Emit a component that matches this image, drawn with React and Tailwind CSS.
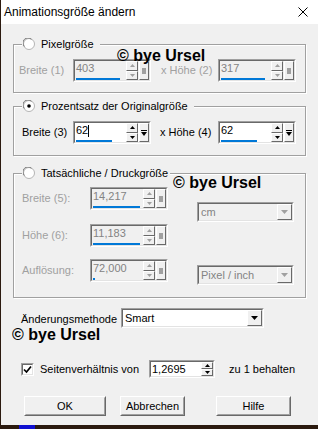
import React from 'react';

const sunkenOuter = 'border border-t-[#a0a0a0] border-l-[#a0a0a0] border-b-white border-r-white';
const sunkenInner = 'border border-t-[#696969] border-l-[#696969] border-b-[#e3e3e3] border-r-[#e3e3e3]';
const raised = 'border border-t-white border-l-white border-b-[#696969] border-r-[#696969]';

const Radio = ({ checked }) => (
  <svg width="12" height="12" viewBox="0 0 12 12" className="shrink-0">
    <circle cx="6" cy="6" r="5.5" fill="#fff" stroke="#b4b4b4" />
    <path d="M1.4 8.5 A5 5 0 0 1 8.5 1.4" stroke="#7a7a7a" fill="none" />
    {checked && <circle cx="6" cy="6" r="1.8" fill="#000" />}
  </svg>
);

const Tri = ({ up, color }) => (
  <svg width="5" height="3" viewBox="0 0 5 3">
    <path d={up ? 'M0 3 L2.5 0 L5 3Z' : 'M0 0 L5 0 L2.5 3Z'} fill={color} />
  </svg>
);

const SpinBtn = ({ up, enabled }) => (
  <div className={`flex-1 flex items-center justify-center bg-[#f0f0f0] ${raised}`}>
    <Tri up={up} color={enabled ? '#000' : '#a0a0a0'} />
  </div>
);

const SpinBox = ({ value, enabled, bar, square = true, w = 'w-[78px]', h = 'h-[23px]', showBar = true }) => (
  <div className={`${w} ${h} ${sunkenOuter} shrink-0`}>
    <div className={`flex h-full ${sunkenInner} ${enabled ? 'bg-white' : 'bg-[#f0f0f0]'}`}>
      <div className="flex-1 flex flex-col justify-between pl-[1px]">
        <span className={`text-[11px] leading-[15px] ${enabled ? 'text-black' : 'text-[#838383]'}`}>{value}</span>
        {showBar && <div className="h-[2px] bg-[#0078d7]" style={{ width: bar }} />}
      </div>
      <div className="w-[12px] flex flex-col">
        <SpinBtn up enabled={enabled} />
        <SpinBtn enabled={enabled} />
      </div>
      {square && (
        <div className={`w-[10px] ml-[1px] flex items-center justify-center bg-[#f0f0f0] ${raised}`}>
          {enabled ? (
            <svg width="6" height="6" viewBox="0 0 6 6">
              <path d="M0 0.5 H6" stroke="#000" />
              <path d="M0 2 L6 2 L3 6Z" fill="#000" />
            </svg>
          ) : (
            <div className="w-[4px] h-[6px] bg-[#a0a0a0]" />
          )}
        </div>
      )}
    </div>
  </div>
);

const Select = ({ value, enabled, w }) => (
  <div className={`${w} h-[20px] ${sunkenOuter} shrink-0`}>
    <div className={`flex h-full ${sunkenInner} ${enabled ? 'bg-white' : 'bg-[#f0f0f0]'}`}>
      <span className={`flex-1 pl-[2px] text-[11px] leading-[16px] ${enabled ? 'text-black' : 'text-[#838383]'}`}>{value}</span>
      <div className={`w-[15px] flex items-center justify-center bg-[#f0f0f0] ${raised}`}>
        <svg width="7" height="4" viewBox="0 0 7 4">
          <path d="M0 0 L7 0 L3.5 4Z" fill={enabled ? '#000' : '#a0a0a0'} />
        </svg>
      </div>
    </div>
  </div>
);

const Legend = ({ label, checked, pad }) => (
  <div className={`flex items-center gap-[6px] -mt-[7px] ml-[8px] self-start bg-[#f0f0f0] pl-[1px] ${pad}`}>
    <Radio checked={checked} />
    <span className="text-[11px] leading-[12px] text-black">{label}</span>
  </div>
);

const Button = ({ label, w, className = '' }) => (
  <div className={`${w} h-[20px] border border-t-white border-l-white border-b-[#696969] border-r-[#696969] ${className}`}>
    <div className="h-full flex items-center justify-center border border-t-[#f0f0f0] border-l-[#f0f0f0] border-b-[#a0a0a0] border-r-[#a0a0a0] text-[11px] text-black">
      {label}
    </div>
  </div>
);

const Watermark = ({ className }) => (
  <span className={`absolute text-[16px] leading-[18px] font-bold text-black whitespace-nowrap ${className}`}>© bye Ursel</span>
);

const groupBox = 'w-[293px] flex flex-col border border-[#a0a0a0] shadow-[inset_1px_1px_0_#fff,1px_1px_0_#fff]';

export default function App() {
  return (
    <div
      className="w-[318px] h-[429px] flex flex-col overflow-hidden bg-[#2b1a0f]"
      style={{ fontFamily: '"Liberation Sans", Arial, sans-serif' }}
    >
      <div className="ml-[1px] w-[317px] h-[425px] flex flex-col bg-[#f0f0f0] relative">
        {/* title bar */}
        <div className="h-[24px] bg-white flex items-center justify-between pl-[3px] pr-[10px]">
          <span className="text-[12px] text-black">Animationsgröße ändern</span>
          <svg width="10" height="10" viewBox="0 0 10 10">
            <path d="M0.5 0.5 L9.5 9.5 M9.5 0.5 L0.5 9.5" stroke="#000" strokeWidth="1" />
          </svg>
        </div>

        <div className="flex flex-col pl-[12px]">
          {/* Pixelgröße */}
          <div className={`${groupBox} h-[49px] mt-[20px]`}>
            <Legend label="Pixelgröße" pad="pr-[6px]" />
            <div className="flex items-center mt-[9px] pl-[5px]">
              <span className="w-[54px] text-[11px] text-[#a0a0a0]">Breite (1)</span>
              <SpinBox value="403" bar="44px" />
              <span className="ml-[10px] w-[57px] text-[11px] text-[#a0a0a0]">x Höhe (2)</span>
              <SpinBox value="317" bar="44px" />
            </div>
          </div>

          {/* Prozentsatz */}
          <div className={`${groupBox} h-[50px] mt-[13px]`}>
            <Legend label="Prozentsatz der Originalgröße" checked pad="pr-[6px]" />
            <div className="flex items-center mt-[9px] pl-[8px]">
              <span className="w-[51px] text-[11px] text-black">Breite (3)</span>
              <SpinBox value={<>62<span className="inline-block w-[1px] h-[12px] bg-black align-middle" /></>} enabled bar="36px" />
              <span className="ml-[9px] w-[58px] text-[11px] text-black">x Höhe (4)</span>
              <SpinBox value="62" enabled bar="36px" />
            </div>
          </div>

          {/* Tatsächliche / Druckgröße */}
          <div className={`${groupBox} h-[125px] mt-[17px]`}>
            <Legend label="Tatsächliche / Druckgröße" pad="pr-[2px]" />
            <div className="flex pl-[8px]">
              <div className="flex flex-col">
                <div className="flex items-center mt-[8px]">
                  <span className="w-[68px] text-[11px] text-[#a0a0a0]">Breite (5):</span>
                  <SpinBox value="14,217" bar="47px" />
                </div>
                <div className="flex items-center mt-[14px]">
                  <span className="w-[68px] text-[11px] text-[#a0a0a0]">Höhe (6):</span>
                  <SpinBox value="11,183" bar="47px" />
                </div>
                <div className="flex items-center mt-[12px]">
                  <span className="w-[68px] text-[11px] text-[#a0a0a0]">Auflösung:</span>
                  <SpinBox value="72,000" bar="2px" />
                </div>
              </div>
              <div className="flex flex-col ml-[29px]">
                <div className="mt-[23px]">
                  <Select value="cm" w="w-[97px]" />
                </div>
                <div className="mt-[43px]">
                  <Select value="Pixel / inch" w="w-[97px]" />
                </div>
              </div>
            </div>
          </div>

          {/* Änderungsmethode */}
          <div className="flex items-center mt-[10px] pl-[8px]">
            <span className="w-[100px] pt-[2px] text-[11px] leading-[14px] text-black">Änderungsmethode</span>
            <Select value="Smart" enabled w="w-[143px]" />
          </div>

          {/* Seitenverhältnis */}
          <div className="flex items-center mt-[32px] pl-[8px]">
            <div className={`w-[13px] h-[13px] ${sunkenOuter} shrink-0`}>
              <div className={`w-full h-full bg-white ${sunkenInner} flex items-center justify-center`}>
                <svg width="9" height="9" viewBox="0 0 9 9">
                  <path d="M1 4.5 L3.5 7 L8 1.5" stroke="#000" strokeWidth="1.7" fill="none" />
                </svg>
              </div>
            </div>
            <span className="ml-[6px] w-[109px] text-[11px] text-black">Seitenverhältnis von</span>
            <SpinBox value="1,2695" enabled square={false} showBar={false} w="w-[66px]" h="h-[18px]" />
            <span className="ml-[14px] text-[11px] text-black">zu 1 behalten</span>
          </div>

          {/* buttons */}
          <div className="flex items-center mt-[18px]">
            <Button label="OK" w="w-[82px]" className="ml-[11px]" />
            <Button label="Abbrechen" w="w-[65px]" className="ml-[14px]" />
            <Button label="Hilfe" w="w-[75px]" className="ml-[31px]" />
          </div>
        </div>

        <Watermark className="left-[116px] top-[47px]" />
        <Watermark className="left-[172px] top-[174px]" />
        <Watermark className="left-[11px] top-[326px]" />
      </div>
      <div className="flex h-[4px]">
        <div className="ml-[19px] w-[16px] bg-[#1010d0]" />
      </div>
    </div>
  );
}
